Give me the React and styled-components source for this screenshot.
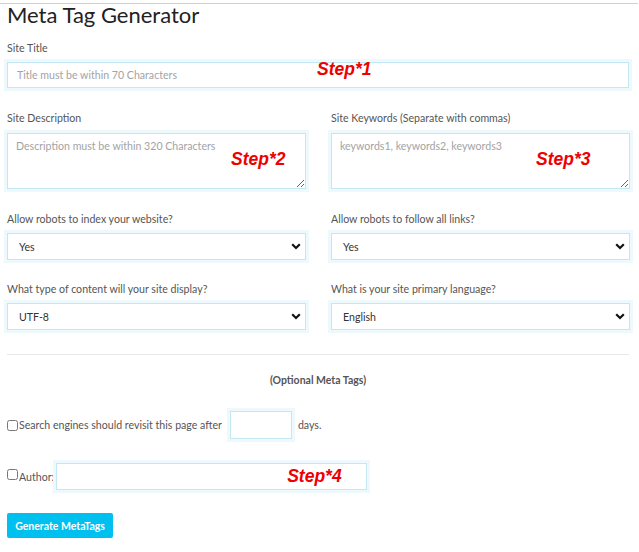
import React from 'react';
import styled, { createGlobalStyle } from 'styled-components';

const GlobalStyle = createGlobalStyle`
  html, body {
    margin: 0;
    padding: 0;
    background: #fff;
  }
  body {
    font-family: Lato, "Open Sans", Arial, sans-serif;
  }
  * {
    box-sizing: border-box;
  }
`;

const Page = styled.div`
  margin-top: 3px;
  border-top: 1px solid #d2d2d2;
  width: 638px;
  padding: 0 9px 20px 7px;
`;

const Title = styled.h1`
  margin: -3px 0 0 0;
  font-size: 22px;
  line-height: 27px;
  font-weight: 400;
  color: #222;
`;

const Group = styled.div`
  position: relative;
  margin-top: ${(p) => p.$top || 0}px;
`;

const Columns = styled.div`
  display: grid;
  grid-template-columns: 299px 299px;
  column-gap: 25px;
  margin-top: ${(p) => p.$top || 0}px;
`;

const Label = styled.label`
  display: block;
  font-size: 10.6px;
  line-height: 16px;
  color: #555;
  margin-bottom: ${(p) => p.$gap || 6}px;
`;

const fieldStyle = `
  display: block;
  width: 100%;
  border: 1px solid #c4e7f4;
  box-shadow: 0 0 0 3px #edf9fd;
  background: #fff;
  font-family: Lato, "Open Sans", Arial, sans-serif;
  font-size: 10.6px;
  color: #333;
  outline: none;
  &::placeholder {
    color: #a3a3a3;
  }
`;

const TextInput = styled.input`
  ${fieldStyle}
  height: ${(p) => p.$h || 26}px;
  padding: 0 9px;
`;

const TextArea = styled.textarea`
  ${fieldStyle}
  height: 56px;
  padding: 6px 8px;
  resize: vertical;
`;

const FieldBox = styled.div`
  position: relative;
`;

const Select = styled.select`
  ${fieldStyle}
  height: 27px;
  padding: 0 11px;
  appearance: none;
  -webkit-appearance: none;
  border-radius: 0;
`;

const Chevron = styled.svg`
  position: absolute;
  right: 5px;
  top: 10px;
  pointer-events: none;
`;

const Step = styled.span`
  position: absolute;
  left: ${(p) => p.$x}px;
  top: ${(p) => p.$y}px;
  font-family: "Liberation Sans", Arial, sans-serif;
  font-style: italic;
  font-weight: 700;
  font-size: 17.5px;
  line-height: 19px;
  color: #ee0000;
  pointer-events: none;
`;

const Divider = styled.hr`
  margin: 24px 0 0 0;
  border: 0;
  border-top: 1px solid #e8e8e8;
`;

const Optional = styled.div`
  margin-top: 17px;
  text-align: center;
  font-size: 10.5px;
  line-height: 16px;
  font-weight: 700;
  color: #555;
`;

const CheckRow = styled.div`
  position: relative;
  display: flex;
  align-items: center;
  margin-top: ${(p) => p.$top}px;
  font-size: 10.6px;
  color: #555;
`;

const Check = styled.input`
  width: 11px;
  height: 11px;
  margin: ${(p) => (p.$up ? '-4px' : '0')} 1px 0 0;
  flex: none;
`;

const Inline = styled(TextInput)`
  width: ${(p) => p.$w}px;
  margin-left: ${(p) => p.$ml}px;
  margin-right: ${(p) => p.$mr || 0}px;
`;

const Button = styled.button`
  margin-top: 23px;
  display: block;
  width: 106px;
  height: 25px;
  border: 0;
  border-radius: 2px;
  background: #00c0ef;
  color: #fff;
  font-family: Lato, "Open Sans", Arial, sans-serif;
  font-size: 10.5px;
  font-weight: 700;
  padding: 0;
`;

function ArrowDown() {
  return (
    <Chevron width="10" height="7" viewBox="0 0 10 7">
      <path d="M1.2 1.3 L5 5 L8.8 1.3" fill="none" stroke="#111" strokeWidth="2.2" />
    </Chevron>
  );
}

function SelectField({ label, value, options }) {
  return (
    <Group>
      <Label $gap={6}>{label}</Label>
      <FieldBox>
        <Select defaultValue={value}>
          {options.map((o) => (
            <option key={o}>{o}</option>
          ))}
        </Select>
        <ArrowDown />
      </FieldBox>
    </Group>
  );
}

export default function App() {
  return (
    <>
      <GlobalStyle />
      <Page>
        <Title>Meta Tag Generator</Title>

        <Group $top={12}>
          <Label>Site Title</Label>
          <FieldBox>
            <TextInput placeholder="Title must be within 70 Characters" />
            <Step $x={310} $y={-2}>Step*1</Step>
          </FieldBox>
        </Group>

        <Columns $top={22}>
          <Group>
            <Label $gap={7}>Site Description</Label>
            <FieldBox>
              <TextArea placeholder="Description must be within 320 Characters" />
              <Step $x={224} $y={17}>Step*2</Step>
            </FieldBox>
          </Group>
          <Group>
            <Label $gap={7}>Site Keywords (Separate with commas)</Label>
            <FieldBox>
              <TextArea placeholder="keywords1, keywords2, keywords3" />
              <Step $x={205} $y={17}>Step*3</Step>
            </FieldBox>
          </Group>
        </Columns>

        <Columns $top={22}>
          <SelectField label="Allow robots to index your website?" value="Yes" options={['Yes', 'No']} />
          <SelectField label="Allow robots to follow all links?" value="Yes" options={['Yes', 'No']} />
        </Columns>

        <Columns $top={21}>
          <SelectField
            label="What type of content will your site display?"
            value="UTF-8"
            options={['UTF-8', 'UTF-16', 'ISO-8859-1']}
          />
          <SelectField
            label="What is your site primary language?"
            value="English"
            options={['English', 'French', 'Spanish']}
          />
        </Columns>

        <Divider />
        <Optional>(Optional Meta Tags)</Optional>

        <CheckRow $top={23}>
          <Check type="checkbox" />
          <span>Search engines should revisit this page after</span>
          <Inline $w={62} $h={28} $ml={8} $mr={6} />
          <span>days.</span>
        </CheckRow>

        <CheckRow $top={24}>
          <Check type="checkbox" $up />
          <span>Author:</span>
          <FieldBox>
            <Inline $w={311} $h={27} $ml={2} />
            <Step $x={233} $y={4}>Step*4</Step>
          </FieldBox>
        </CheckRow>

        <Button>Generate MetaTags</Button>
      </Page>
    </>
  );
}
